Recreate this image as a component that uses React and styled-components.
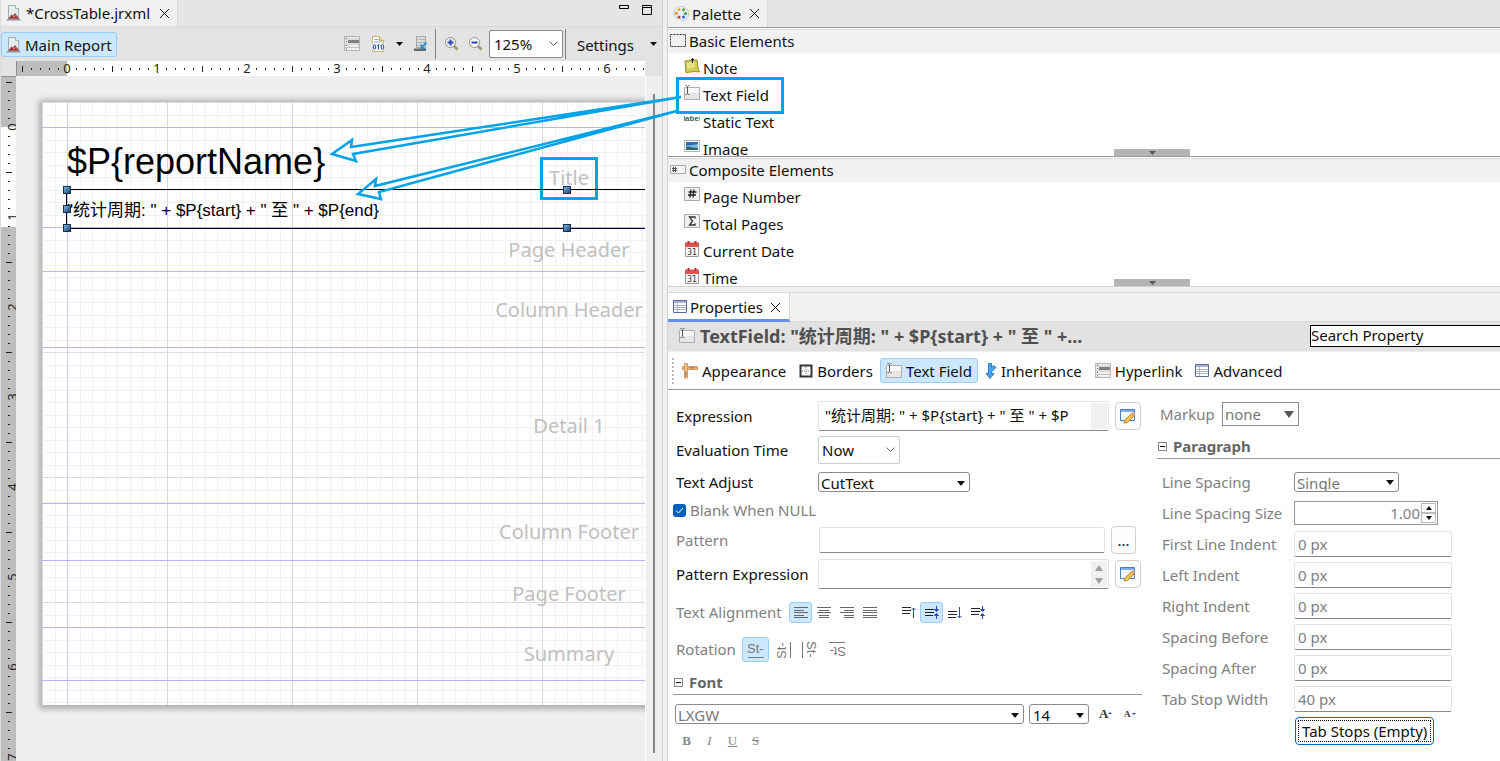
import React from 'react';
import styled, { createGlobalStyle, css } from 'styled-components';

const GlobalStyle = createGlobalStyle`
    * {
      box-sizing: border-box;
    }
    body {
      margin: 0;
      background: #f0f0f0;
      color: #111;
      font: 15px/20px "Noto Sans", "Noto Sans CJK SC", sans-serif;
    }
    button, input, select, textarea {
      margin: 0;
      font: inherit;
      color: inherit;
    }
`;

const ANNOTATION = '#00a2e8';

/* ---------- shell ---------- */

const Shell = styled.main`
    position: relative;
    display: grid;
    grid-template-columns: minmax(0, 663fr) 4px minmax(0, 833fr);
    height: 100vh;
    min-height: 600px;
    overflow: hidden;
`;

const Editor = styled.section`
    display: flex;
    flex-direction: column;
    min-height: 0;
    border-left: 1px solid #dcdcdc;
    border-right: 1px solid #d2d2d2;
`;

const Side = styled.section`
    display: flex;
    flex-direction: column;
    min-height: 0;
    border-left: 1px solid #d2d2d2;
`;

const TabBar = styled.header`
    display: flex;
    flex: none;
    height: ${props => props.$height || 27}px;
    background: ${props => props.$bg || '#e5e5e5'};
    border-bottom: 1px solid ${props => props.$line || '#d9d9d9'};
`;

const Tab = styled.div`
    display: flex;
    align-items: center;
    gap: ${props => props.$gap || 3}px;
    padding: 0 5px;
    background: ${props => props.$active ? '#fff' : '#f0f0f0'};
    border-right: 1px solid #d9d9d9;
    white-space: nowrap;
    ${props => props.$active && css`
      padding-top: 2px;
      border-bottom: 3px solid #658fe8;
      margin-bottom: -1px;
    `}
`;

const BareButton = styled.button`
    display: flex;
    align-items: center;
    justify-content: center;
    width: ${props => props.$width ? props.$width + 'px' : 'auto'};
    padding: 0;
    border: 0;
    background: none;
`;

const CloseButton = styled(BareButton)`
    width: 16px;
    height: 16px;
    margin-left: 2px;
`;

const WindowButtons = styled.div`
    display: flex;
    gap: 11px;
    margin: 3px 9px 0 auto;
    height: 14px;
`;

/* ---------- editor toolbar ---------- */

const Toolbar = styled.div`
    display: flex;
    align-items: center;
    flex: none;
    height: 34px;
    background: #e3e3e3;
`;

const ToolGroup = styled.div`
    display: flex;
    align-items: center;
    gap: ${props => props.$gap}px;
    padding: 0 ${props => props.$end}px 0 5px;
    height: 30px;
    border-left: ${props => props.$line ? '1px solid #808080' : '0'};
    margin-left: ${props => props.$push ? 'auto' : '0'};
`;

const ToggleButton = styled.button`
    display: flex;
    align-items: center;
    justify-content: center;
    gap: ${props => props.$gap || 3}px;
    height: ${props => props.$height || 25}px;
    min-width: ${props => props.$width || 0}px;
    padding: 1px ${props => props.$pad || 0}px 0;
    border: 1px solid ${props => props.$on ? '#99cdf8' : 'transparent'};
    border-radius: 3px;
    background: ${props => props.$on ? '#cce8ff' : 'none'};
    white-space: nowrap;
`;

/* ---------- selects ---------- */

const SelectBox = styled.span`
    display: inline-grid;
    align-items: center;
    flex: none;
    width: ${props => props.$width}px;
    height: ${props => props.$height || 20}px;
    overflow: hidden;
    background: #fff;
    border: 1px solid ${props => props.$line || '#8a8a8a'};
    border-radius: ${props => props.$radius}px;
    color: ${props => props.$muted ? '#777' : '#111'};
    > * {
      grid-area: 1 / 1;
    }
    > svg {
      justify-self: end;
      margin-right: 4px;
      pointer-events: none;
    }
    select {
      appearance: none;
      width: 100%;
      height: 20px;
      padding: 0 18px 0 ${props => props.$pad || 2}px;
      border: 0;
      background: none;
      outline: 0;
    }
`;

/* ---------- canvas ---------- */

const RulerRow = styled.div`
    display: flex;
    flex: none;
    height: 15px;
    padding: 0 17px 0 15px;
    background: #e3e3e3;
`;

const RulerSvg = styled.svg`
    display: block;
    flex: ${props => props.$vertical ? 'none' : 1};
    width: ${props => props.$vertical ? '15px' : 'auto'};
    height: auto;
    min-width: 0;
    overflow: ${props => props.$vertical ? 'visible clip' : 'clip visible'};
    background: #fff;
    border-${props => props.$vertical ? 'top' : 'left'}: 1px solid #8f8f8f;
    font-size: 13px;
`;

const CanvasRow = styled.div`
    display: flex;
    flex: 1;
    min-height: 0;
    overflow: hidden;
`;

const Viewport = styled.div`
    flex: 1;
    min-width: 0;
    overflow: hidden;
    padding: 26px 0 0 26px;
    background: #efefef;
    border-right: 1px solid #fff;
`;

const Scroller = styled.div`
    flex: none;
    width: 16px;
    padding: 18px 6px 8px 7px;
    background: #efefef;
    &::before {
      content: "";
      display: block;
      width: 2px;
      height: 100%;
      background: #858585;
    }
`;

// A4 landscape at 125%: minor grid every 12.5px, major grid every 125px
const Page = styled.div`
    position: relative;
    width: 1052px;
    padding: 25px 0 24px;
    background-color: #fff;
    background-image:
      linear-gradient(90deg, transparent 25px, #ccccf4 25px, #ccccf4 26px, transparent 26px),
      linear-gradient(180deg, transparent 25px, #b9b9e8 25px, #b9b9e8 26px, transparent 26px),
      repeating-linear-gradient(90deg, #d8d8d8 0 1px, transparent 1px 125px),
      repeating-linear-gradient(180deg, #dcdcdc 0 1px, transparent 1px 125px),
      repeating-linear-gradient(90deg, #f1f1f1 0 1px, transparent 1px 25px),
      repeating-linear-gradient(90deg, transparent 0 13px, #f1f1f1 13px 14px, transparent 14px 25px),
      repeating-linear-gradient(180deg, #f1f1f1 0 1px, transparent 1px 25px),
      repeating-linear-gradient(180deg, transparent 0 13px, #f1f1f1 13px 14px, transparent 14px 25px);
    box-shadow: 0 1px 6px 3px #adadad;
`;

const Band = styled.div`
    display: flex;
    align-items: center;
    justify-content: center;
    height: ${props => props.$height}px;
    padding-left: 2px;
    border-bottom: 1px solid #b9b4f8;
    color: #c0c0c0;
    font-size: 20px;
    line-height: 28px;
`;

const MarkedLabel = styled.span`
    padding: 4px 6px 5px;
    margin-top: 2px;
    border: 3px solid ${ANNOTATION};
`;

const ReportField = styled.div`
    position: absolute;
    left: 25px;
    top: ${props => props.$top}px;
    width: 1002px;
    height: ${props => props.$height}px;
    color: #000;
    font-family: "Liberation Sans", "Noto Sans CJK SC", sans-serif;
    font-size: ${props => props.$size}px;
    line-height: ${props => props.$line}px;
    white-space: nowrap;
    outline: ${props => props.$selected ? '1px solid #000' : '0'};
`;

const HANDLE_SPOTS = {
    nw: 'left: -4px; top: -4px;',
    w: 'left: -4px; top: 15px;',
    sw: 'left: -4px; bottom: -4px;',
    n: 'left: 496px; top: -4px;',
    s: 'left: 496px; bottom: -4px;',
};

const Handle = styled.i`
    position: absolute;
    width: 8px;
    height: 8px;
    border: 1px solid #12304f;
    background: linear-gradient(135deg, #79b3e0, #1d466f);
    ${props => HANDLE_SPOTS[props.$spot]}
`;

const Arrows = styled.svg`
    position: absolute;
    left: 0;
    top: 0;
    width: 700px;
    height: 220px;
    pointer-events: none;
`;

/* ---------- palette ---------- */

const Drawer = styled.div`
    position: relative;
    flex: none;
    height: ${props => props.$height}px;
    overflow: hidden;
    background: #fff;
    border-bottom: 1px solid ${props => props.$last ? '#d0d0d0' : '#999'};
`;

const DrawerHead = styled.div`
    display: flex;
    align-items: center;
    gap: 3px;
    height: 24px;
    margin-top: 1px;
    padding: 0 0 1px 2px;
    border-top: 1px solid #ddd;
    background: #f1f1f1;
`;

const DrawerList = styled.ul`
    margin: 0;
    padding: 2px 0 0 13px;
    list-style: none;
`;

const DrawerItem = styled.li`
    position: relative;
    z-index: ${props => props.$marked ? 1 : 0};
    display: flex;
    gap: 3px;
    width: max-content;
    height: 27px;
    padding: 3px 10px 0 3px;
    outline: ${props => props.$marked ? '3px solid ' + ANNOTATION : '0'};
    outline-offset: 2px;
`;

const DrawerGrip = styled(BareButton)`
    position: absolute;
    bottom: 0;
    left: 50%;
    margin-left: 30px;
    width: 76px;
    height: 7px;
    background: #b4b4b4;
`;

/* ---------- properties ---------- */

const Properties = styled.div`
    display: flex;
    flex-direction: column;
    flex: 1;
    min-height: 0;
    margin-top: 5px;
    overflow: hidden;
    background: #fff;
    border-top: 1px solid #d9d9d9;
`;

const TitleRow = styled.div`
    display: flex;
    align-items: center;
    flex: none;
    gap: 5px;
    height: 30px;
    padding: 0 0 2px 11px;
    background: #e2e2e2;
    border-bottom: 1px solid #eee;
    h1 {
      flex: 1;
      margin: 0;
      font-size: 18px;
      line-height: 24px;
      color: #505050;
    }
    input {
      width: 190px;
      height: 22px;
      padding: 0 0 1px;
      border: 1px solid #000;
      border-right: 0;
      background: #fff;
    }
    input::placeholder {
      color: #111;
    }
`;

const CategoryBar = styled.nav`
    display: flex;
    align-items: center;
    flex: none;
    gap: 1px;
    height: 38px;
    padding-left: 4px;
    border-bottom: 1px solid #999;
    &::before {
      content: "";
      width: 2px;
      height: 26px;
      margin-right: 1px;
      background: repeating-linear-gradient(#bbb 0 2px, transparent 2px 4px);
    }
`;

const Sheet = styled.form`
    display: grid;
    grid-template-columns: 469px minmax(0, 1fr);
    gap: 15px;
    padding: 9px 0 0 5px;
`;

const Column = styled.div`
    min-width: 0;
`;

const Row = styled.div`
    display: flex;
    align-items: center;
    gap: ${props => props.$gap || 0}px;
    height: ${props => props.$height || 34}px;
    padding-left: ${props => props.$indent || 0}px;
    color: ${props => props.$muted ? '#808080' : '#111'};
    white-space: nowrap;
`;

const Label = styled.label`
    flex: none;
    width: ${props => props.$width ? props.$width + 'px' : 'auto'};
`;

const SectionHead = styled.h2`
    display: flex;
    align-items: center;
    gap: 6px;
    height: 30px;
    margin: 0 0 ${props => props.$after || 0}px;
    padding: 5px 0 0 1px;
    border-bottom: 1px solid #999;
    font-size: 15px;
    line-height: 20px;
    color: #666;
`;

const Expander = styled(BareButton)`
    width: 9px;
    height: 9px;
    border: 1px solid #888;
    &::before {
      content: "";
      width: 5px;
      height: 1px;
      background: #000;
    }
`;

const TextInput = styled.input`
    width: ${props => props.$width}px;
    height: 26px;
    padding: 1px 3px 0;
    border: 1px solid #e3e3e3;
    border-bottom-color: #888;
    border-radius: 2px;
    background: #fff;
    color: #808080;
`;

const ExpressionBox = styled.span`
    display: flex;
    width: 291px;
    height: 30px;
    margin-right: 6px;
    padding: 1px;
    border: 1px solid #e3e3e3;
    border-bottom-color: #888;
    border-radius: 2px;
    textarea {
      flex: 1;
      min-width: 0;
      padding: 2px 5px;
      border: 0;
      outline: 0;
      resize: none;
      overflow: hidden;
      white-space: nowrap;
    }
    > span {
      display: flex;
      flex-direction: column;
      align-items: center;
      justify-content: space-around;
      width: 16px;
      background: #f0f0f0;
    }
`;

const SquareButton = styled(BareButton)`
    width: ${props => props.$width || 26}px;
    height: 28px;
    border: 1px solid #d0d0d0;
    border-radius: 4px;
    background: #fdfdfd;
    color: #111;
`;

const CheckRow = styled(Row)`
    label {
      display: grid;
      grid-template-columns: 13px auto;
      align-items: center;
      column-gap: 4px;
    }
    input {
      grid-area: 1 / 1;
      appearance: none;
      width: 13px;
      height: 13px;
      border-radius: 3px;
      background: #005fb8;
    }
    svg {
      grid-area: 1 / 1;
      justify-self: center;
      pointer-events: none;
    }
`;

const Spinner = styled.span`
    display: flex;
    width: 144px;
    height: 24px;
    padding: 1px;
    border: 1px solid #999;
    input {
      flex: 1;
      min-width: 0;
      padding: 0 1px;
      border: 0;
      text-align: right;
      background: none;
      color: #808080;
    }
    > span {
      display: flex;
      flex-direction: column;
      width: 15px;
    }
    button {
      flex: 1;
      border: 1px solid #bbb;
    }
`;

const FocusButton = styled.button`
    height: 28px;
    margin-left: 133px;
    padding: 0 6px;
    border: 1px solid #0067c0;
    border-radius: 4px;
    background: #fdfdfd;
    outline: 1px dotted #000;
    outline-offset: -4px;
`;

const StyleButton = styled(BareButton)`
    width: 23px;
    height: 16px;
    font: 13px/16px "Liberation Serif", serif;
    font-weight: ${props => props.$bold ? 700 : 400};
    font-style: ${props => props.$italic ? 'italic' : 'normal'};
    text-decoration: ${props => props.$line || 'none'};
    color: #888;
`;

/* ---------- icons ---------- */

function Icon({ w = 16, h = 16, children }) {
    return (
        <svg width={w} height={h} viewBox={`0 0 ${w} ${h}`} fill="none" aria-hidden="true">
            {children}
        </svg>
    );
}

const CloseIcon = () => (
    <Icon w={11} h={11}><path d="M1 1l9 9M10 1l-9 9" stroke="#111" /></Icon>
);

const Caret = ({ w = 8, h = 5, color = '#111' }) => (
    <Icon w={w} h={h}><path d={`M0 0H${w}L${w / 2} ${h}Z`} fill={color} /></Icon>
);

const UpCaret = ({ w = 8, h = 5, color = '#111' }) => (
    <Icon w={w} h={h}><path d={`M0 ${h}H${w}L${w / 2} 0Z`} fill={color} /></Icon>
);

const Chevron = () => (
    <Icon w={9} h={6}><path d="M.5.5l4 4 4-4" stroke="#666" /></Icon>
);

const ReportIcon = () => (
    <Icon>
        <path d="M2.500.5h7l3 3v10.500h-10Z" fill="#e3eeee" stroke="#a3b0b0" />
        <path d="M9.500.5v3h3" fill="#fff" stroke="#a3b0b0" />
        <path d="M0 15.500L3 12.500h9.500l2.500 3Z" fill="#8c9599" />
        <path d="M2.500 13.500L5.500 9.500l1.500 1L9 8l4 5.500Z" fill="#a5383a" />
        <path d="M7 10.500l1 1.500 1.500-2" stroke="#d98a86" />
    </Icon>
);

const RowsIcon = () => (
    <Icon>
        <path d="M.5.5h15v14H.5Z" fill="#f1f1f1" stroke="#b5b5b5" />
        <path d="M4 4h11v3H4Z" fill="#808080" />
        <path d="M1 3h14M1 8h14M1 11.500h14" stroke="#c4c4c4" />
        <path d="M2 2h1M2 5.500h1M2 9.500h1M2 13h1" stroke="#555" />
    </Icon>
);

const DataIcon = () => (
    <Icon>
        <path d="M2.500.5h7l4 4v11h-11Z" fill="#f9fbff" stroke="#c9b36b" />
        <path d="M9.500.5v4h4" fill="#f0d890" stroke="#c9a85b" />
        <path d="M4.500 3.500h4M4.500 6h7" stroke="#8aa6d6" />
        <path d="M2 8h13v6H2Z" fill="#eef4ff" />
        <ellipse cx="4.500" cy="11" rx="1.300" ry="2.300" stroke="#1f3d7a" />
        <path d="M7.500 9.500l1-1v5" stroke="#1f3d7a" />
        <ellipse cx="12.500" cy="11" rx="1.300" ry="2.300" stroke="#1f3d7a" />
    </Icon>
);

const ServerIcon = () => (
    <Icon>
        <path d="M3.500.5h9v11h-9Z" fill="#dcdcdc" stroke="#a5a5a5" />
        <path d="M4 3.500h8M4 6.500h8M4 9.500h8" stroke="#b5b5b5" />
        <path d="M1 12.500h12v2.500H1Z" fill="#666" />
        <path d="M13.500 6.500L10 10" stroke="#2f8fd0" strokeWidth="2" />
        <path d="M7.500 7.500V13H13Z" fill="#2f8fd0" />
    </Icon>
);

const ZoomIcon = ({ plus }) => (
    <Icon>
        <path d="M9.500 9.500l4 4" stroke="#a8906c" strokeWidth="2.500" />
        <circle cx="6.500" cy="6.500" r="5" fill="#f2f6ff" stroke="#9a917c" />
        <path d={plus ? 'M3.500 6.500h6M6.500 3.500v6' : 'M3.500 6.500h6'} stroke="#2743b8" strokeWidth="2" />
    </Icon>
);

const PaletteIcon = () => (
    <Icon>
        <path d="M8 .5C13 .5 15.500 4 15.500 8S12.500 15 9.500 15c-2 0-1-2.500-3-2.500C3 13 .5 10.500.5 7.500S3.500.5 8 .5Z" fill="#e8eefa" stroke="#c0c9da" />
        <circle cx="6" cy="3.500" r="1.500" fill="#e6b800" />
        <circle cx="10.500" cy="3.800" r="1.500" fill="#5ea21e" />
        <circle cx="12.500" cy="7.500" r="1.500" fill="#2e9e4f" />
        <circle cx="3.200" cy="7.300" r="1.500" fill="#e98b1c" />
        <circle cx="6" cy="11" r="1.500" fill="#d33a2c" />
        <circle cx="10.500" cy="11" r="1.500" fill="#2d62c4" />
    </Icon>
);

const MarqueeIcon = () => (
    <Icon>
        <path d="M.5 1.500h15v12H.5Z" stroke="#333" strokeDasharray="2 1" />
    </Icon>
);

const NoteIcon = () => (
    <Icon>
        <path d="M1 3l12-1 1 8 1.500 4-5-.500L2 14.500Z" fill="#d2cc54" stroke="#8f8b2c" />
        <path d="M3 5l8-1v5l-8 2Z" fill="#e6e183" />
        <path d="M8.500 0v5M7 1.500h3" stroke="#222" />
    </Icon>
);

const TextFieldIcon = () => (
    <Icon>
        <path d="M.5 2.500h15v12H.5Z" fill="#e6e6e6" stroke="#adadad" />
        <path d="M1 3h14v5H1Z" fill="#f7f7f7" />
        <path d="M3.500 1.500v7M1.500.5h1l1 1 1-1h1M1.500 9.500h1l1-1 1 1h1" stroke="#555" />
    </Icon>
);

const LabelIcon = () => (
    <Icon>
        <text x="8" y="9" textAnchor="middle" fontSize="8" fontWeight="700" fill="#555" fontFamily="Liberation Sans">label</text>
    </Icon>
);

const ImageIcon = () => (
    <Icon>
        <path d="M.5 1.500h15v11H.5Z" fill="#fff" stroke="#a9b6c2" />
        <path d="M2 3h12v8H2Z" fill="#7db7e8" />
        <path d="M2 3h12v2L2 7Z" fill="#2f6fb4" />
        <path d="M2 8c4-1 7 1 12 1v2H2Z" fill="#2c6a5a" />
    </Icon>
);

const HashIcon = () => (
    <Icon>
        <path d="M.5 3.500h15v8H.5Z" fill="#f4f4f4" stroke="#aaa" />
        <path d="M3.500 5v5M5.500 5v5M2 6.500h5M2 8.500h5" stroke="#555" />
    </Icon>
);

const BoxIcon = ({ children }) => (
    <Icon>
        <path d="M.5.5h15v13H.5Z" fill="#f0f0f0" stroke="#aaa" />
        {children}
    </Icon>
);

const NumberIcon = () => (
    <BoxIcon><path d="M7 2.500l-1 8M10 2.500l-1 8M4.500 5h8M4 8h8" stroke="#222" strokeWidth="1.300" /></BoxIcon>
);

const SumIcon = () => (
    <BoxIcon><path d="M11 4.500V3H5.500l3 4-3 4H11V9.500" stroke="#333" strokeWidth="1.300" /></BoxIcon>
);

const CalendarIcon = () => (
    <Icon>
        <path d="M1.500 2.500h13v13h-13Z" fill="#fbfbfb" stroke="#999" />
        <path d="M1 1.500h14V6H1Z" fill="#e05252" />
        <path d="M4.500 0v3M11.500 0v3" stroke="#a33" strokeWidth="2" />
        <text x="8" y="13.500" textAnchor="middle" fontSize="8" fill="#333" fontFamily="DejaVu Sans">31</text>
    </Icon>
);

const TableIcon = () => (
    <Icon w={14} h={14}>
        <path d="M.5.5h13v12H.5Z" fill="#fff" stroke="#5d6b92" />
        <path d="M1 1h12v2H1Z" fill="#a5b2d2" />
        <path d="M1 5.500h12M1 7.500h12M1 9.500h12M4.500 3v9" stroke="#a9b3c9" />
    </Icon>
);

const AppearanceIcon = () => (
    <Icon>
        <path d="M.5 3.500h15v3H.5Z" fill="#e8b077" stroke="#cf9a63" />
        <path d="M2.500.5h3v14.500h-3Z" fill="#f0c28f" stroke="#cf9a63" />
        <path d="M8 4v1M10 4v2M12 4v1M3 9h1M3 11h2M3 13h1" stroke="#8d5f31" />
    </Icon>
);

const BordersIcon = () => (
    <Icon w={14} h={14}>
        <path d="M1.500 1.500h11v11h-11Z" fill="#fff" stroke="#333" strokeWidth="2" />
        <path d="M7 3v8M3 7h8" stroke="#777" strokeDasharray="1 1" />
    </Icon>
);

const InheritanceIcon = () => (
    <Icon w={12} h={16}>
        <path d="M3.500.5h3V5l2-2.500 2.500 2L6.500 9v1.500H9L5 15.500l-4-5h2.500Z" fill="#49a4ec" stroke="#2b7fc6" />
    </Icon>
);

const EditIcon = () => (
    <Icon>
        <path d="M.5 1.500h14v11H.5Z" fill="#f4f9ff" stroke="#4c7fc0" />
        <path d="M1 2h13v2H1Z" fill="#7faee6" />
        <path d="M5 12l6.500-6.500L14 8l-6.500 6.500-3.500.5Z" fill="#f4c352" stroke="#b98a2c" />
        <path d="M11.500 5.500L14 8l1.500-1.500-2.500-2.500Z" fill="#e59d8a" />
    </Icon>
);

const ALIGN_LINES = {
    left: [[0, 14], [0, 10], [0, 14], [0, 10], [0, 14]],
    center: [[0, 14], [2, 12], [0, 14], [2, 12], [2, 12]],
    right: [[0, 14], [4, 14], [0, 14], [4, 14], [4, 14]],
    justify: [[0, 14], [0, 14], [0, 14], [0, 14], [0, 14]],
};

const AlignIcon = ({ kind }) => (
    <Icon w={14} h={12}>
        {ALIGN_LINES[kind].map(([from, to], i) => (
            <path key={i} d={`M${from} ${i * 2.5 + .5}H${to}`} stroke="#666" shapeRendering="crispEdges" />
        ))}
    </Icon>
);

const SQUEEZE = 'M11.500 0v5M9.500 3.500h4l-2 2ZM11.500 13V8M9.500 9.500h4l-2-2Z';

const VALIGN = {
    top: { y: 2, arrow: 'M11.500 12V2M9.500 4l2-2 2 2' },
    middle: { y: 4, arrow: SQUEEZE },
    bottom: { y: 6, arrow: 'M11.500 1v11M9.500 10l2 2 2-2' },
    spread: { y: 3, arrow: SQUEEZE },
};

const VAlignIcon = ({ kind }) => (
    <Icon w={14} h={13}>
        {[0, 1, 2].map(i => (
            <path key={i} d={`M0 ${VALIGN[kind].y + i * 3 - .5}h${i === 2 ? 8 : 9}`} stroke="#222" shapeRendering="crispEdges" />
        ))}
        <path d={VALIGN[kind].arrow} stroke="#2748c0" />
    </Icon>
);

const RotationIcon = ({ angle }) => (
    <Icon w={20} h={20}>
        <g transform={`rotate(${angle} 10 10)`}>
            <text x="1" y="13" fontSize="13" fill="#777" fontFamily="Liberation Sans">St-</text>
            <path d="M2 17.500h16" stroke="#777" />
        </g>
    </Icon>
);

const FontSizeIcon = ({ grow }) => (
    <Icon w={16} h={14}>
        <text x="2" y={grow ? 11 : 10} fontSize={grow ? 13 : 9} fontWeight="700" fill="#333" fontFamily="Liberation Serif">A</text>
        <path d={grow ? 'M11 7h4l-2-2Z' : 'M10 6h4l-2 2Z'} fill="#2748c0" />
    </Icon>
);

/* ---------- parts ---------- */

function Select({ id, label, options, icon, ...box }) {
    return (
        <SelectBox {...box}>
            <select id={id} aria-label={label} defaultValue={options[0]}>
                {options.map(option => <option key={option}>{option}</option>)}
            </select>
            {icon || <Caret />}
        </SelectBox>
    );
}

const TICKS = Array.from({ length: 83 }, (_, i) => i - 5);

// One unit is 90px, split in ten; the zero mark sits 50px after the start.
function Ruler({ vertical, shaded }) {
    return (
        <RulerSvg $vertical={vertical} aria-hidden="true">
            {shaded.map(([from, size]) => (
                vertical
                    ? <rect key={from} x="0" y={from} width="15" height={size} fill="#bdbdbd" />
                    : <rect key={from} x={from} y="0" width={size} height="15" fill="#bdbdbd" />
            ))}
            {TICKS.map(i => {
                const at = 50 + i * 9;
                if (i % 10 === 0) {
                    return (
                        <text key={i} textAnchor="middle" fill="#222" transform={vertical ? `translate(16 ${at}) rotate(-90)` : `translate(${at} 12)`}>
                            {i / 10}
                        </text>
                    );
                }
                const size = i % 5 === 0 ? 6 : 2;
                const start = 8 - size / 2;
                return vertical
                    ? <rect key={i} x={start} y={at} width={size} height="1" fill="#222" />
                    : <rect key={i} x={at} y={start} width="1" height={size} fill="#222" />;
            })}
        </RulerSvg>
    );
}

const BANDS = [
    { name: 'Title', height: 101, marked: true },
    { name: 'Page Header', height: 44 },
    { name: 'Column Header', height: 76 },
    { name: 'Detail 1', height: 156 },
    { name: 'Column Footer', height: 57 },
    { name: 'Page Footer', height: 67 },
    { name: 'Summary', height: 53 },
];

function ReportPage() {
    return (
        <Page>
            {BANDS.map(band => (
                <Band key={band.name} $height={band.height}>
                    {band.marked ? <MarkedLabel>{band.name}</MarkedLabel> : band.name}
                </Band>
            ))}
            <ReportField $top={38} $height={46} $line={44} $size={36}>{'$P{reportName}'}</ReportField>
            <ReportField $top={88} $height={38} $line={42} $size={17} $selected>
                {'"统计周期: " + $P{start} + " 至 " + $P{end}'}
                {Object.keys(HANDLE_SPOTS).map(spot => <Handle key={spot} $spot={spot} />)}
            </ReportField>
        </Page>
    );
}

function EditorPane() {
    return (
        <Editor>
            <TabBar>
                <Tab $gap={4}>
                    <ReportIcon />
                    <span>*CrossTable.jrxml</span>
                    <CloseButton aria-label="Close CrossTable.jrxml"><CloseIcon /></CloseButton>
                </Tab>
                <WindowButtons>
                    <BareButton aria-label="Minimize">
                        <Icon w={12} h={14}><path d="M1.500 2.500h9v3h-9Z" stroke="#000" /></Icon>
                    </BareButton>
                    <BareButton aria-label="Maximize">
                        <Icon w={12} h={14}><path d="M1.500 2.500h9v9h-9ZM1.500 4.500h9" stroke="#000" /></Icon>
                    </BareButton>
                </WindowButtons>
            </TabBar>
            <Toolbar>
                <ToggleButton $on $pad={4}><ReportIcon />Main Report</ToggleButton>
                <ToolGroup $push $gap={10} $end={6}>
                    <BareButton aria-label="Bands"><RowsIcon /></BareButton>
                    <BareButton aria-label="Dataset"><DataIcon /></BareButton>
                    <BareButton aria-label="Dataset menu"><Caret w={7} h={4} /></BareButton>
                    <BareButton aria-label="Publish"><ServerIcon /></BareButton>
                </ToolGroup>
                <ToolGroup $line $gap={2} $end={2}>
                    <BareButton aria-label="Zoom in" $width={22}><ZoomIcon plus /></BareButton>
                    <BareButton aria-label="Zoom out" $width={22}><ZoomIcon /></BareButton>
                    <Select label="Zoom" options={['125%']} icon={<Chevron />} $width={74} $height={28} $radius={2} $pad={4} />
                </ToolGroup>
                <ToolGroup $line $gap={10} $end={5}>
                    <ToggleButton $pad={5}>Settings</ToggleButton>
                    <BareButton aria-label="Settings menu"><Caret w={7} h={4} /></BareButton>
                </ToolGroup>
            </Toolbar>
            <RulerRow>
                <Ruler shaded={[[0, 50]]} />
            </RulerRow>
            <CanvasRow>
                <Ruler vertical shaded={[[0, 50], [150, 900]]} />
                <Viewport><ReportPage /></Viewport>
                <Scroller />
            </CanvasRow>
        </Editor>
    );
}

const DRAWERS = [
    {
        name: 'Basic Elements',
        icon: MarqueeIcon,
        items: [['Note', NoteIcon], ['Text Field', TextFieldIcon], ['Static Text', LabelIcon], ['Image', ImageIcon]],
    },
    {
        name: 'Composite Elements',
        icon: HashIcon,
        items: [['Page Number', NumberIcon], ['Total Pages', SumIcon], ['Current Date', CalendarIcon], ['Time', CalendarIcon]],
    },
];

function PalettePane() {
    return (
        <>
            <TabBar $height={28} $line="#999">
                <Tab>
                    <PaletteIcon />
                    <span>Palette</span>
                    <CloseButton aria-label="Close Palette"><CloseIcon /></CloseButton>
                </Tab>
            </TabBar>
            {DRAWERS.map((drawer, i) => (
                <Drawer key={drawer.name} $height={i === 0 ? 129 : 130} $last={i === 1}>
                    <DrawerHead><drawer.icon />{drawer.name}</DrawerHead>
                    <DrawerList>
                        {drawer.items.map(([name, ItemIcon]) => (
                            <DrawerItem key={name} $marked={name === 'Text Field'}>
                                <ItemIcon /><span>{name}</span>
                            </DrawerItem>
                        ))}
                    </DrawerList>
                    <DrawerGrip aria-label={'Resize ' + drawer.name}><Caret w={7} h={4} color="#555" /></DrawerGrip>
                </Drawer>
            ))}
        </>
    );
}

const CATEGORIES = [
    ['Appearance', AppearanceIcon],
    ['Borders', BordersIcon],
    ['Text Field', TextFieldIcon],
    ['Inheritance', InheritanceIcon],
    ['Hyperlink', RowsIcon],
    ['Advanced', TableIcon],
];

const INDENTS = [
    ['First Line Indent', '0 px'],
    ['Left Indent', '0 px'],
    ['Right Indent', '0 px'],
    ['Spacing Before', '0 px'],
    ['Spacing After', '0 px'],
    ['Tab Stop Width', '40 px'],
];

function TextColumn() {
    return (
        <Column>
            <Row $indent={3}>
                <Label htmlFor="expression" $width={142}>Expression</Label>
                <ExpressionBox>
                    <textarea id="expression" rows={1} defaultValue={'"统计周期: " + $P{start} + " 至 " + $P'} />
                    <span />
                </ExpressionBox>
                <SquareButton type="button" aria-label="Edit expression"><EditIcon /></SquareButton>
            </Row>
            <Row $indent={3}>
                <Label htmlFor="evaluation" $width={142}>Evaluation Time</Label>
                <Select id="evaluation" options={['Now']} icon={<Chevron />} $width={82} $height={28} $radius={2} $line="#ccc" $pad={3} />
            </Row>
            <Row $indent={3} $height={30}>
                <Label htmlFor="adjust" $width={142}>Text Adjust</Label>
                <Select id="adjust" options={['CutText']} $width={152} $radius={3} />
            </Row>
            <CheckRow $height={26} $muted>
                <label>
                    <input type="checkbox" defaultChecked />
                    <Icon w={9} h={9}><path d="M1 4.500l2.500 2.500L8 2" stroke="#fff" /></Icon>
                    Blank When NULL
                </label>
            </CheckRow>
            <Row $indent={3} $muted>
                <Label htmlFor="pattern" $width={143}>Pattern</Label>
                <TextInput id="pattern" $width={286} />
                <Row $indent={6}>
                    <SquareButton type="button" $width={25}>...</SquareButton>
                </Row>
            </Row>
            <Row $indent={3}>
                <Label htmlFor="patternExpression" $width={142}>Pattern Expression</Label>
                <ExpressionBox>
                    <textarea id="patternExpression" rows={1} />
                    <span>
                        <UpCaret w={8} h={6} color="#a0a0a0" />
                        <Caret w={8} h={6} color="#a0a0a0" />
                    </span>
                </ExpressionBox>
                <SquareButton type="button" aria-label="Edit pattern expression"><EditIcon /></SquareButton>
            </Row>
            <Row $indent={3} $height={42} $muted>
                <Label as="span" $width={113}>Text Alignment</Label>
                {Object.keys(ALIGN_LINES).map(kind => (
                    <ToggleButton type="button" key={kind} aria-label={kind} $on={kind === 'left'} $width={23} $height={21}>
                        <AlignIcon kind={kind} />
                    </ToggleButton>
                ))}
                <Row $indent={16}>
                    {Object.keys(VALIGN).map(kind => (
                        <ToggleButton type="button" key={kind} aria-label={kind} $on={kind === 'middle'} $width={23} $height={21}>
                            <VAlignIcon kind={kind} />
                        </ToggleButton>
                    ))}
                </Row>
            </Row>
            <Row $indent={3} $height={32} $muted>
                <Label as="span" $width={66}>Rotation</Label>
                {[0, -90, 90, 180].map(angle => (
                    <ToggleButton type="button" key={angle} aria-label={'Rotate ' + angle} $on={angle === 0} $width={27}>
                        <RotationIcon angle={angle} />
                    </ToggleButton>
                ))}
            </Row>
            <SectionHead><Expander type="button" aria-label="Collapse font" />Font</SectionHead>
            <Row $indent={2} $height={38} $gap={5}>
                <Select label="Font name" options={['LXGW']} $width={349} $radius={3} $muted />
                <Select label="Font size" options={['14']} $width={60} $radius={3} $pad={3} />
                <Row $indent={3} $gap={9}>
                    <BareButton type="button" aria-label="Increase font size"><FontSizeIcon grow /></BareButton>
                    <BareButton type="button" aria-label="Decrease font size"><FontSizeIcon /></BareButton>
                </Row>
            </Row>
            <Row $indent={2} $height={16}>
                <StyleButton type="button" $bold>B</StyleButton>
                <StyleButton type="button" $italic>I</StyleButton>
                <StyleButton type="button" $line="underline">U</StyleButton>
                <StyleButton type="button" $line="line-through">S</StyleButton>
            </Row>
        </Column>
    );
}

function ParagraphColumn() {
    return (
        <Column>
            <Row $indent={3} $height={30} $muted>
                <Label htmlFor="markup" $width={62}>Markup</Label>
                <Select id="markup" options={['none']} icon={<Caret w={10} h={7} color="#555" />} $width={77} $height={24} $radius={0} $muted />
            </Row>
            <SectionHead $after={7}><Expander type="button" aria-label="Collapse paragraph" />Paragraph</SectionHead>
            <Row $indent={5} $height={31} $muted>
                <Label htmlFor="spacing" $width={132}>Line Spacing</Label>
                <Select id="spacing" options={['Single']} $width={105} $radius={3} $muted />
            </Row>
            <Row $indent={5} $height={31} $muted>
                <Label htmlFor="spacingSize" $width={132}>Line Spacing Size</Label>
                <Spinner>
                    <input id="spacingSize" defaultValue="1.00" />
                    <span>
                        <BareButton type="button" aria-label="Increase"><UpCaret w={6} h={4} /></BareButton>
                        <BareButton type="button" aria-label="Decrease"><Caret w={6} h={4} /></BareButton>
                    </span>
                </Spinner>
            </Row>
            {INDENTS.map(([name, value]) => (
                <Row key={name} $indent={5} $height={31} $muted>
                    <Label htmlFor={name} $width={132}>{name}</Label>
                    <TextInput id={name} defaultValue={value} $width={158} />
                </Row>
            ))}
            <Row $indent={5}>
                <FocusButton type="button">Tab Stops (Empty)</FocusButton>
            </Row>
        </Column>
    );
}

function PropertiesPane() {
    return (
        <Properties>
            <TabBar $height={29} $bg="#f1f1f1">
                <Tab $active>
                    <TableIcon />
                    <span>Properties</span>
                    <CloseButton aria-label="Close Properties"><CloseIcon /></CloseButton>
                </Tab>
            </TabBar>
            <TitleRow>
                <TextFieldIcon />
                <h1>{'TextField: "统计周期: " + $P{start} + " 至 " +...'}</h1>
                <input aria-label="Search Property" placeholder="Search Property" />
            </TitleRow>
            <CategoryBar>
                {CATEGORIES.map(([name, CategoryIcon]) => (
                    <ToggleButton key={name} $on={name === 'Text Field'} $pad={5} $gap={4}><CategoryIcon />{name}</ToggleButton>
                ))}
            </CategoryBar>
            <Sheet>
                <TextColumn />
                <ParagraphColumn />
            </Sheet>
        </Properties>
    );
}

function App() {
    return (
        <Shell>
            <GlobalStyle />
            <EditorPane />
            <span />
            <Side>
                <PalettePane />
                <PropertiesPane />
            </Side>
            <Arrows aria-hidden="true" fill="none" stroke={ANNOTATION} strokeWidth="2.5">
                <path d="M681 97L351 147l1-7-20 14 24 7-3-7Z" />
                <path d="M677 111L375 186l1-7-18 15 23 5-2-7Z" />
            </Arrows>
        </Shell>
    );
}

export default App;
